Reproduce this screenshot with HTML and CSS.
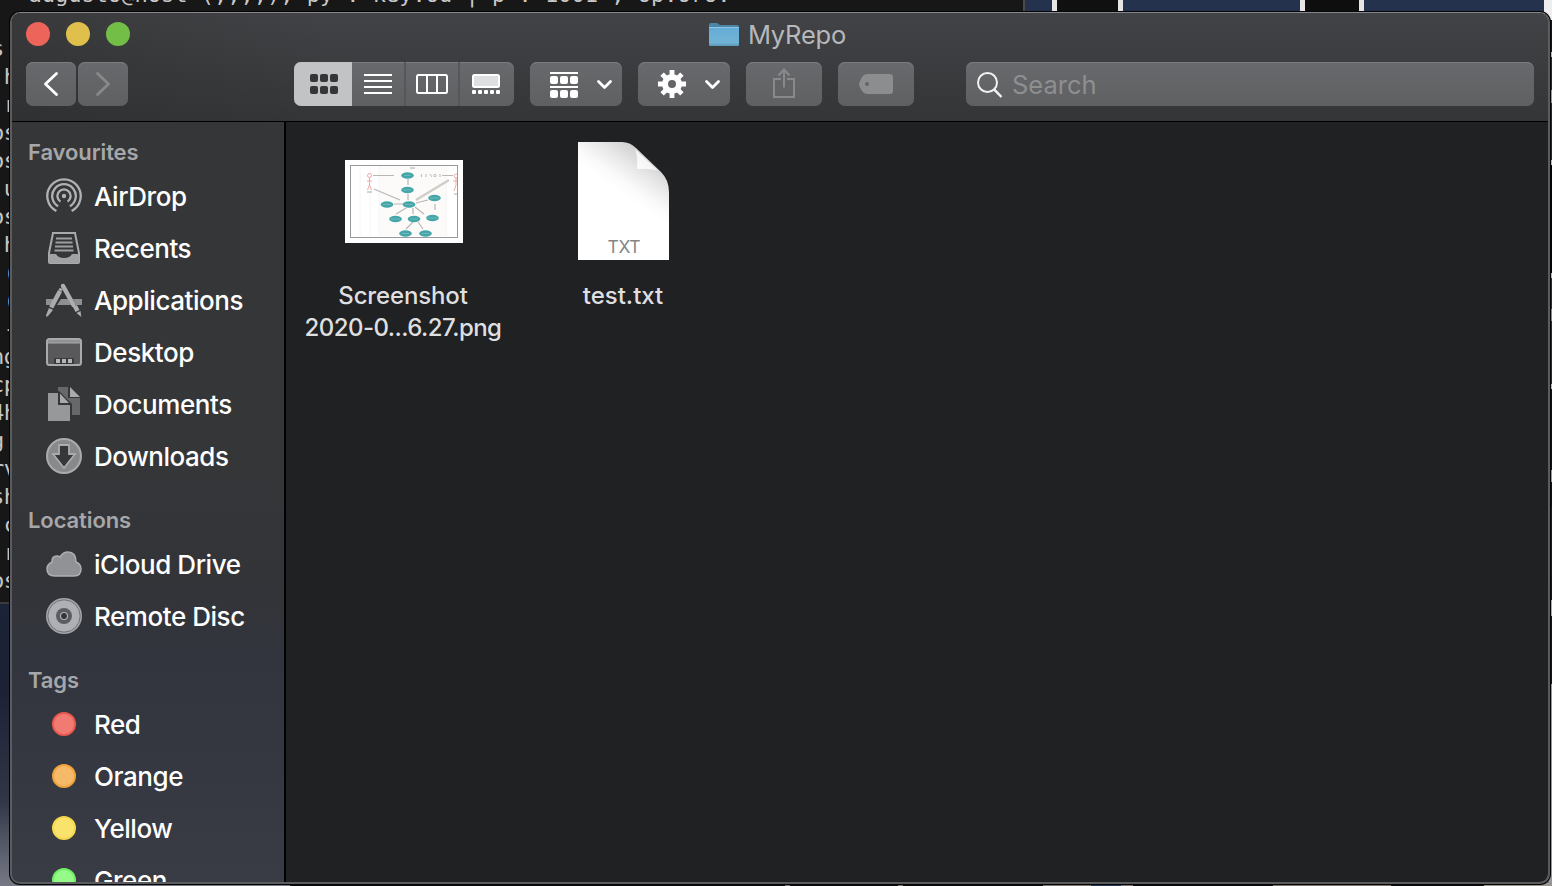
FILE: index.html
```html
<!DOCTYPE html>
<html lang="en">
<head>
<meta charset="utf-8">
<title>MyRepo</title>
<link rel="stylesheet" href="styles.css">
</head>
<body>
<div class="desktop">
  <div class="terminal">
    <div class="terminal-top">&nbsp;  augusto@host (,,,,), py . key.od | p . 1001 , op.oro.</div>
<pre class="terminal-text">s
 h
 r
os
os
 u
os
 h
 (
 (
 -
ng
cp
4h
g
rv
sh
 c
 r
os</pre>
  </div>
  <div class="backdrop-top"><i class="b1"></i><i class="b2"></i><i class="b3"></i><i class="b4"></i><i class="b5"></i><i class="b6"></i></div>
  <div class="backdrop-right"></div>
  <div class="backdrop-bottom"></div>

  <main class="window">
    <header class="titlebar">
      <div class="title-row">
        <div class="lights"><i class="close"></i><i class="minimise"></i><i class="zoom"></i></div>
        <div class="title">
          <svg width="32" height="26" viewBox="0 0 32 26">
            <defs><linearGradient id="folder" x1="0" y1="0" x2="0" y2="1"><stop offset="0" stop-color="#64acd6"/><stop offset=".8" stop-color="#72b3d6"/><stop offset="1" stop-color="#5c9abb"/></linearGradient></defs>
            <path d="M1 3q0-2 2-2h6l3 2h17q2 0 2 2v4H1z" fill="#4d86a4"/>
            <path d="M1 5.500h30v17q0 1.500-1.500 1.500h-27Q1 24 1 22.500z" fill="url(#folder)"/>
            <path d="M1 5.500h30" stroke="#8cc7e6"/>
          </svg>
          <span>MyRepo</span>
        </div>
      </div>
      <div class="toolbar">
        <div class="nav">
          <div class="btn"><svg width="50" height="44" viewBox="0 0 50 44"><path d="M30.500 11.500 19.500 22l11 10.500" fill="none" stroke="#fff" stroke-width="2.800" stroke-linecap="round" stroke-linejoin="round"/></svg></div>
          <div class="btn"><svg width="50" height="44" viewBox="0 0 50 44"><path d="M19.500 11.500 30.500 22l-11 10.500" fill="none" stroke="#88898b" stroke-width="2.800" stroke-linecap="round" stroke-linejoin="round"/></svg></div>
        </div>
        <div class="views">
          <div class="view active"><svg width="28" height="20" viewBox="0 0 28 20" fill="#353638"><rect width="8" height="8" rx="2"/><rect x="10" width="8" height="8" rx="2"/><rect x="20" width="8" height="8" rx="2"/><rect y="12" width="8" height="8" rx="2"/><rect x="10" y="12" width="8" height="8" rx="2"/><rect x="20" y="12" width="8" height="8" rx="2"/></svg></div>
          <div class="view"><svg width="28" height="20" viewBox="0 0 28 20"><path d="M0 1h28M0 7h28M0 13h28M0 19h28" stroke="#fff" stroke-width="2"/></svg></div>
          <div class="view"><svg width="32" height="20" viewBox="0 0 32 20"><rect x="1" y="1" width="30" height="18" rx="1.500" fill="none" stroke="#fff" stroke-width="2"/><path d="M11 1v18M21 1v18" stroke="#fff" stroke-width="2"/></svg></div>
          <div class="view"><svg width="28" height="20" viewBox="0 0 28 20"><rect x="1" y="1" width="26" height="12" rx="1.500" fill="#dedfe0" stroke="#fff" stroke-width="2"/><g fill="#fff"><rect y="16" width="4" height="4" rx="1"/><rect x="6" y="16" width="4" height="4" rx="1"/><rect x="12" y="16" width="4" height="4" rx="1"/><rect x="18" y="16" width="4" height="4" rx="1"/><rect x="24" y="16" width="4" height="4" rx="1"/></g></svg></div>
        </div>
        <div class="btn wide"><svg width="92" height="44" viewBox="0 0 92 44"><g fill="#fff"><path d="M20 10h28v2H20zM20 24h28v2H20z"/><rect x="20" y="14" width="8" height="8" rx="2"/><rect x="30" y="14" width="8" height="8" rx="2"/><rect x="40" y="14" width="8" height="8" rx="2"/><rect x="20" y="28" width="8" height="8" rx="2"/><rect x="30" y="28" width="8" height="8" rx="2"/><rect x="40" y="28" width="8" height="8" rx="2"/></g><path d="M68.500 19.500l6 6 6-6" fill="none" stroke="#fff" stroke-width="2.800" stroke-linecap="round" stroke-linejoin="round"/></svg></div>
        <div class="btn wide"><svg width="92" height="44" viewBox="0 0 92 44"><g transform="translate(34 22)" stroke="#fff"><circle r="7" fill="none" stroke-width="6"/><path d="M0-9v-5M0 9v5M-9 0h-5M9 0h5M-6.500-6.500l-3.400-3.400M6.500-6.500l3.400-3.400M-6.500 6.500l-3.400 3.400M6.500 6.500l3.400 3.400" stroke-width="4.800"/></g><path d="M68.500 19.500l6 6 6-6" fill="none" stroke="#fff" stroke-width="2.800" stroke-linecap="round" stroke-linejoin="round"/></svg></div>
        <div class="btn action"><svg width="76" height="44" viewBox="0 0 76 44" fill="none" stroke="#88898b" stroke-width="2"><path d="M35 17h-7v18h20V17h-7M38 25.500V8M32.500 13.500 38 7.500l5.500 6"/></svg></div>
        <div class="btn action"><svg width="76" height="44" viewBox="0 0 76 44"><path fill="#8c8d8f" fill-rule="evenodd" d="M29 12h23q3 0 3 3v14q0 3-3 3H29q-3 0-5-3l-2.500-4.500q-1-2.500 0-4.500L24 15q2-3 5-3zm0 8a2 2 0 1 0 0 4 2 2 0 0 0 0-4z"/></svg></div>
        <div class="search"><svg width="26" height="27" viewBox="0 0 26 27" fill="none" stroke="#f2f2f3" stroke-width="2"><circle cx="10.500" cy="11.500" r="9.500"/><path d="M17.300 18.600l7.200 7.400" stroke-width="2.500"/></svg><span>Search</span></div>
      </div>
    </header>
    <div class="content">
      <aside class="sidebar">
        <h2>Favourites</h2>
        <ul>
          <li><svg width="36" height="36" viewBox="0 0 36 36" fill="none" stroke="#b0b1b3" stroke-width="2.300"><circle cx="18" cy="18" r="2.200" fill="#b0b1b3" stroke="none"/><path d="M14.500 23.600a6.600 6.600 0 1 1 7 0M12.200 28.300a11.800 11.800 0 1 1 11.600 0M10.400 32.900a16.700 16.700 0 1 1 15.200 0"/></svg><span>AirDrop</span></li>
          <li><svg width="36" height="36" viewBox="0 0 36 36"><path d="M7 3h22l4 20v9q0 1-1 1H4q-1 0-1-1v-9z" fill="none" stroke="#a9aaac" stroke-width="2"/><path d="M3 24h7q2 4 8 4t8-4h7v8q0 1-1 1H4q-1 0-1-1z" fill="#a1a2a4"/><path d="M10 8.500h16M9.500 12.500h17M9 16.500h18M8.500 20.500h19" stroke="#9d9ea0" stroke-width="2"/></svg><span>Recents</span></li>
          <li><svg width="36" height="36" viewBox="0 0 36 36"><path d="M0 17h11l-3 6H0zM15 17h7l3 6H11zM27 17h9v6h-6z" fill="#8e8f91"/><path d="M14 9 5.200 25.500" stroke="#aaabad" stroke-width="4.500"/><path d="M15.500 6.500l1 1-1 2-3-1.500 1-2z" fill="#aaabad"/><path d="M3 26l4 2-5 6-2 1 .3-2.500z" fill="#aaabad"/><path d="M17 4l10.500 19" stroke="#adaeb0" stroke-width="4.500" stroke-linecap="round"/><path d="M27 25l4-2 2.500 5-4 2zM30.500 31l4-2 .8 6z" fill="#adaeb0"/></svg><span>Applications</span></li>
          <li><svg width="36" height="36" viewBox="0 0 36 36"><rect x="1" y="5" width="34" height="26" rx="2.500" fill="#59595c" stroke="#a9aaac" stroke-width="2"/><path d="M2 6h32v3H2z" fill="#909193"/><path d="M2 9h32" stroke="#a9aaac"/><path d="M8 24h20v6H8z" fill="#38393b"/><path d="M10 25h4v4h-4zM16 25h4v4h-4zM22 25h4v4h-4z" fill="#b4b5b7"/></svg><span>Desktop</span></li>
          <li><svg width="36" height="36" viewBox="0 0 36 36"><path d="M12 1h10v11h12v17H12z" fill="#67686a"/><path d="M24 1l10 10H24z" fill="#a9aaac"/><path d="M0 5h13l13 13v18H0z" fill="#353638"/><path d="M2 7h10v12h12v16H2z" fill="#97989a"/><path d="M14 7.500l9 9.500h-9z" fill="#a9aaac"/></svg><span>Documents</span></li>
          <li><svg width="36" height="36" viewBox="0 0 36 36"><circle cx="18" cy="18" r="17" fill="#88898b" stroke="#aaabad" stroke-width="2"/><path d="M13 7h10v9h6L18 30 7 16h6z" fill="#36373a" stroke="#aaabad" stroke-width="1.800"/></svg><span>Downloads</span></li>
        </ul>
        <h2>Locations</h2>
        <ul>
          <li><svg width="36" height="36" viewBox="0 0 36 36"><path d="M9 30q-8 0-8-7 0-4.500 5-7-.5-6 5-6 1.500 0 3 1 3-5 8-5 8 0 8 10 5 2 5 7 0 7-7 7z" fill="#919295" stroke="#aeafb2" stroke-width="1.500"/></svg><span>iCloud Drive</span></li>
          <li><svg width="36" height="36" viewBox="0 0 36 36"><circle cx="18" cy="18" r="18" fill="#a4a5aa"/><circle cx="18" cy="18" r="16.200" fill="#aeb0b5" stroke="#717277"/><circle cx="18" cy="18" r="8" fill="#5b5c61"/><circle cx="18" cy="18" r="3.500" fill="#34353a" stroke="#aeb0b5" stroke-width="1.200"/></svg><span>Remote Disc</span></li>
        </ul>
        <h2>Tags</h2>
        <ul>
          <li><i class="tag red"></i><span>Red</span></li>
          <li><i class="tag orange"></i><span>Orange</span></li>
          <li><i class="tag yellow"></i><span>Yellow</span></li>
          <li><i class="tag green"></i><span>Green</span></li>
        </ul>
      </aside>
      <section class="files">
        <div class="file">
          <div class="preview preview-shot">
            <svg class="shot" width="118" height="83" viewBox="0 0 118 83">
              <path fill="#fff" d="M0 0h118v83H0z"/><path fill="#fcfbf9" d="M34 6h68v70H34z"/>
              <path d="M15 6v70M25 6v70M34 6v70M101 6v70" stroke="#f5f6f7"/>
              <rect x="5.500" y="5.500" width="107" height="72" fill="none" stroke="#999a9c"/>
              <g fill="none" stroke="#b9b7b4" stroke-width="1.200"><path d="M28 15.500h21M97 15.500h11M29 29l26 11M63 19v6M63 34v6M49 44h9M71 43l12-3M61 48 51 54M68 48v6M70 47l9 7M68 62l-7 7M73 62l5 7M90 44v6"/></g>
              <path d="M71 40l33-20" stroke="#d1cdc7" stroke-width="2.500"/>
              <path d="M77 14l-1 2 1 1M81 14v3M85 14l2 3M95 14v3" stroke="#bbb" fill="none"/><circle cx="90" cy="15.500" r="1.200" fill="none" stroke="#bbb"/>
              <path d="M65 8h5M22 32h5M109 34h3" stroke="#aaa"/>
              <g fill="none" stroke="#f0aaa6"><circle cx="24.500" cy="15.500" r="2"/><path d="M24.500 18v7l-2 5M24.500 25l2 5M22 21h5M112 14q-3 0-3 2t3 2M111 18v7l-2 6M108 21h4"/></g>
              <g fill="#44a6a8"><ellipse cx="62.500" cy="15.500" rx="6.300" ry="3.300"/><ellipse cx="62.500" cy="30" rx="6.300" ry="3.300"/><ellipse cx="64" cy="44.500" rx="6.300" ry="3.300"/><ellipse cx="42" cy="44.500" rx="6.300" ry="3.300"/><ellipse cx="89.500" cy="38" rx="6.300" ry="3.300"/><ellipse cx="50.500" cy="59" rx="6.300" ry="3.300"/><ellipse cx="69" cy="59" rx="6.300" ry="3.300"/><ellipse cx="87.500" cy="58" rx="6.300" ry="3.300"/><ellipse cx="60.500" cy="73.500" rx="6.300" ry="3.300"/><ellipse cx="80.500" cy="73.500" rx="6.300" ry="3.300"/></g>
              <path d="M59.500 15.500h6M58.500 30h8M60 44.500h8M38 44.500h8M85 38h9M46 59h9M65 59h8M83 58h9M57 73.500h7M77 73.500h7" stroke="#6dbaba"/>
            </svg>
          </div>
          <div class="name name-shot">Screenshot<br>2020-0...6.27.png</div>
        </div>
        <div class="file">
          <div class="preview">
            <svg width="91" height="118" viewBox="0 0 91 118">
              <defs>
                <linearGradient id="shade" x1="70" y1="15" x2="44" y2="52" gradientUnits="userSpaceOnUse"><stop offset="0" stop-color="#d2d2d2"/><stop offset=".4" stop-color="#e9e9e9"/><stop offset=".75" stop-color="#fafafa"/><stop offset="1" stop-color="#fff"/></linearGradient>
                <linearGradient id="curl" x1="0" y1="1" x2="1" y2="0"><stop offset="0" stop-color="#fff"/><stop offset=".5" stop-color="#f4f4f4"/></linearGradient>
              </defs>
              <path d="M0 0h44q8 0 14 6l25 24q8 8 8 20v68H0z" fill="url(#shade)"/>
              <path d="M57 7q3 7 2 20 13-1 21 2z" fill="url(#curl)"/>
              <text class="kind" x="46" y="111" text-anchor="middle" textLength="33">TXT</text>
            </svg>
          </div>
          <div class="name name-text">test.txt</div>
        </div>
      </section>
    </div>
  </main>
</div>
</body>
</html>
```
FILE: styles.css
```css
* { box-sizing: border-box; }
body { margin: 0; font-family: Inter, "Liberation Sans", sans-serif; }
svg { display: block; }
h2, ul { margin: 0; padding: 0; }
.desktop { position: relative; width: 1552px; height: 886px; overflow: hidden; background: linear-gradient(#1b2338 600px, #1c2234 690px, #303646 800px, #777986); }
.terminal { position: absolute; left: 0; top: 0; width: 1025px; height: 604px; overflow: hidden; background: #171717; border-right: 2px solid #4a4a4a; border-bottom: 2px solid #3c3c3c; }
.terminal-top { position: absolute; left: 2px; top: -18px; font: 22px/26px "DejaVu Sans Mono", monospace; color: #c9c9c9; white-space: nowrap; }
.terminal-text { position: absolute; left: -9px; top: 35px; margin: 0; font: 22px/28px "DejaVu Sans Mono", monospace; letter-spacing: -.5px; color: #c6c6c6; }
.backdrop-top { position: absolute; left: 1025px; top: 0; width: 527px; height: 30px; display: flex; background: #25324d; }
.backdrop-top i { height: 30px; }
.b1 { width: 27px; background: #25324d; }
.b2 { width: 71px; background: #101010; border: solid #e6e6e6; border-width: 0 5px; }
.b3 { width: 177px; background: #25324d; }
.b4 { width: 64px; background: #0e0e0e; border: solid #e6e6e6; border-width: 0 5px; }
.b5 { width: 180px; background: #25324d; }
.b6 { width: 8px; background: #eee; }
.backdrop-right { position: absolute; right: 0; top: 20px; width: 3px; height: 866px; background: linear-gradient(#15161b 32px, #bbb 32px 37px, #222b3e 37px 70px, #999 70px 83px, #222b3e 83px 140px, #bbb 140px 145px, #050505 145px 253px, #bbb 253px 258px, #262d40 258px 289px, #888 289px 301px, #262d40 301px 364px, #bbb 364px 369px, #111 369px 450px, #999 450px 462px, #111 462px 486px, #171c29 486px 557px, #14171e 557px 580px, #aaa 580px 596px, #14171e 596px 664px, #9a9898 664px); }
.backdrop-bottom { position: absolute; left: 290px; bottom: 0; width: 1262px; height: 3px; background: linear-gradient(90deg, #0b0a0d 495px, #79746f 495px 500px, #0b0a0d 500px 608px, #79746f 608px 613px, #0b0a0d 613px 753px, #79746f 753px 801px, #21365b 801px 831px, #79746f 831px 843px, #0b0a0d 843px 983px, #79746f 983px 1101px, #0b0a0d 1101px 1194px, #99958f 1194px); }
.window { position: absolute; left: 10px; top: 12px; width: 1540px; height: 872px; border: 2px solid #5b5c5e; border-top: 1px solid #86878a; border-radius: 10px; overflow: hidden; display: flex; flex-direction: column; background: #202123; background-clip: padding-box; box-shadow: 0 0 0 1px #050505; }
.titlebar { flex: none; height: 109px; border-bottom: 1px solid #000; background: linear-gradient(90deg, rgba(43,43,44,.4), transparent 320px), linear-gradient(#424346, #343537); }
.title-row { display: grid; grid-template-columns: 1fr auto 1fr; align-items: center; height: 43px; }
.lights { display: flex; gap: 16px; padding: 0 0 2px 14px; }
.lights i { width: 24px; height: 24px; border-radius: 50%; }
.close { background: #ed655a; }
.minimise { background: #e0c04c; }
.zoom { background: #72be47; }
.title { display: flex; align-items: center; gap: 8px; color: #b7b8ba; font-size: 25.500px; letter-spacing: -.2px; margin-left: -6px; }
.toolbar { display: flex; padding: 6px 14px 0 14px; }
.nav { display: flex; gap: 2px; margin-right: 166px; }
.btn, .views, .search { height: 44px; border-radius: 7px; background: linear-gradient(#68696c, #5f6062); box-shadow: inset 0 1px #7b7c7f; overflow: hidden; }
.views { display: flex; width: 220px; margin-right: 16px; }
.view { display: flex; align-items: center; justify-content: center; width: 54px; border-right: 2px solid #56575a; }
.view:last-child { border-color: transparent; }
.view.active { width: 58px; padding-left: 2px; background: #c2c3c5; border-right: 0; }
.wide { margin-right: 16px; }
.action + .action { margin-left: 16px; }
.search { display: flex; align-items: center; gap: 9px; width: 568px; margin-left: 52px; padding-left: 11px; color: #8e8f91; font-size: 25.500px; }
.content { flex: 1; display: flex; min-height: 0; }
.sidebar { width: 274px; flex: none; overflow: hidden; padding-top: 12px; border-right: 2px solid #000; background: linear-gradient(#353638 45%, #333438 60%, #32353e 72%, #393b45); }
.sidebar h2 { height: 36px; padding-left: 16px; color: #a6a7aa; font-size: 22px; line-height: 36px; font-weight: 600; letter-spacing: -.1px; }
.sidebar ul { list-style: none; margin-bottom: 20px; }
.sidebar li { display: flex; align-items: center; height: 52px; padding-left: 34px; gap: 12px; color: #fff; font-size: 26px; font-weight: 500; letter-spacing: -.45px; white-space: nowrap; }
.tag { width: 24px; height: 24px; margin: 0 6px; border: 2px solid; border-radius: 50%; }
.red { background: #f17b72; border-color: #ee5a50; }
.orange { background: #f5b968; border-color: #f0a43f; }
.yellow { background: #fae36d; border-color: #f5d84b; }
.green { background: #96fa89; border-color: #72ed67; }
.files { flex: 1; display: flex; padding: 16px 0 0 7px; align-items: flex-start; }
.file { width: 220px; display: flex; flex-direction: column; align-items: center; color: #dfdfe0; font-size: 24px; font-weight: 500; text-align: center; }
.preview { height: 126px; display: flex; align-items: center; }
.preview-shot { padding-left: 2px; }
.name { line-height: 32px; margin-top: 16px; white-space: nowrap; }
.name-shot { letter-spacing: -.55px; }
.name-shot::first-line { letter-spacing: -.15px; }
.kind { fill: #858585; font-size: 17.500px; font-weight: 400; }
```
